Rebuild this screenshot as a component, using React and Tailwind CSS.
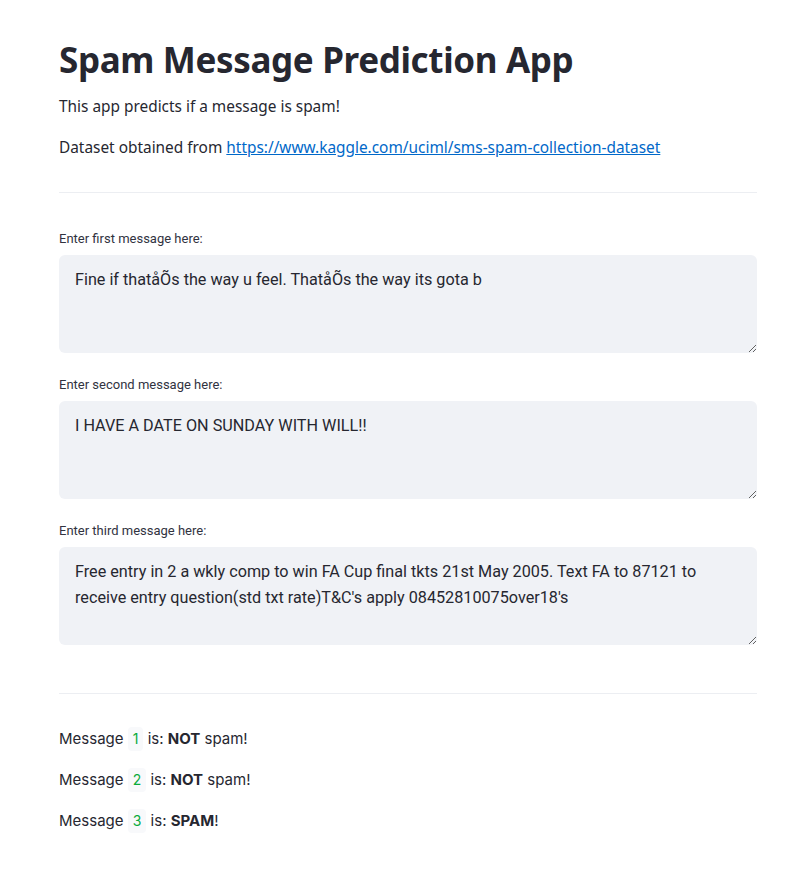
const messages = [
  {
    label: 'Enter first message here:',
    text: 'Fine if thatåÕs the way u feel. ThatåÕs the way its gota b',
  },
  {
    label: 'Enter second message here:',
    text: 'I HAVE A DATE ON SUNDAY WITH WILL!!',
  },
  {
    label: 'Enter third message here:',
    text: "Free entry in 2 a wkly comp to win FA Cup final tkts 21st May 2005. Text FA to 87121 to receive entry question(std txt rate)T&C's apply 08452810075over18's",
  },
];

const results = [
  { n: 1, verdict: 'NOT', rest: ' spam!' },
  { n: 2, verdict: 'NOT', rest: ' spam!' },
  { n: 3, verdict: 'SPAM', rest: '!' },
];

const App = () => {
  return (
    <div className="min-h-screen bg-white text-[#262730] font-['Noto_Sans',sans-serif]">
      <div className="ml-[59px] w-[698px] pt-[38px] pb-10">
        <h1 className="text-[35px] leading-[44px] font-bold tracking-[-0.01em] m-0">
          Spam Message Prediction App
        </h1>
        <p className="mt-[13px] text-[15.4px] leading-6">This app predicts if a message is spam!</p>
        <p className="mt-[17px] text-[15.4px] leading-6">
          Dataset obtained from{' '}
          <a href="#" className="text-[#0068c9] underline">
            https://www.kaggle.com/uciml/sms-spam-collection-dataset
          </a>
        </p>

        <hr className="mt-[32px] border-0 border-t border-[#eceef2]" />

        {/* Inputs */}
        <div className="mt-[37px] flex flex-col gap-[23px]">
          {messages.map((m) => (
            <div key={m.label}>
              <label className="block text-[13px] leading-[17px] text-[#31333f] font-['Roboto',sans-serif]">
                {m.label}
              </label>
              <textarea
                readOnly
                value={m.text}
                className="mt-[8px] block w-full h-[98px] resize-y rounded-[6px] bg-[#f0f2f6] px-4 pt-[12px] text-[16.2px] leading-[26px] text-[#262730] outline-none font-['Roboto',sans-serif]"
              />
            </div>
          ))}
        </div>

        <hr className="mt-[48px] border-0 border-t border-[#eceef2]" />

        {/* Results */}
        <div className="mt-[33px] flex flex-col gap-[17px]">
          {results.map((r) => (
            <p key={r.n} className="text-[15px] leading-6 font-['Inter',sans-serif]">
              Message{' '}
              <code className="inline-block rounded-[4px] bg-[#f8f9fb] px-[5px] text-[14px] text-[#09ab3b] font-['Inter',sans-serif]">
                {r.n}
              </code>{' '}
              is: <b>{r.verdict}</b>
              {r.rest}
            </p>
          ))}
        </div>
      </div>
    </div>
  );
};

export default App;
